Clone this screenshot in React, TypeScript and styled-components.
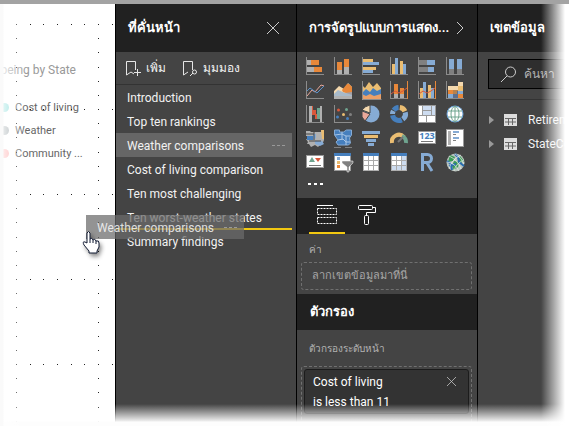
import React from "react";
import styled, { createGlobalStyle } from "styled-components";

const Global = createGlobalStyle`
  *, *::before, *::after { box-sizing: border-box; }
  body { margin: 0; background: #fff; }
  body, button, input { font-family: Roboto, "Open Sans", "Noto Sans", sans-serif; font-size: 12px; line-height: 16px; }
  button { border: 0; padding: 0; background: none; color: inherit; text-align: left; cursor: pointer; }
  h2, ul, p { margin: 0; padding: 0; }
  ul { list-style: none; }
  svg { display: block; flex: none; }
`;

const Page = styled.div`
  position: relative;
  display: grid;
  grid-template-columns: minmax(0, 1fr) 181px 181px 92px;
  height: 100vh;
  overflow: hidden;
  border-top: 4px solid #a3a3a3;
`;

const Fade = styled.div`
  position: absolute;
  inset: -4px 0 0;
  pointer-events: none;
  background:
    linear-gradient(to right, #fafafa 3px, rgba(255, 255, 255, 0.75) 4px, rgba(255, 255, 255, 0) 27px),
    linear-gradient(to left, #fff 4px, rgba(255, 255, 255, 0) 28px),
    linear-gradient(to top, #fdfdfd 4px, rgba(255, 255, 255, 0.9) 5px, rgba(255, 255, 255, 0) 22px);
`;

const Canvas = styled.main`
  position: relative;
  overflow: hidden;
  background: #fff;
  color: #666;
  padding-top: 58px;
`;

const Dots = styled.svg`
  position: absolute;
  inset: 0;
  width: 100%;
  height: 100%;
`;

const ChartTitle = styled.p`
  color: #999;
  white-space: nowrap;
  display: flex;
  justify-content: flex-end;
  width: 76px;
`;

const Legend = styled.ul`
  padding-top: 18px;
  font-size: 11px;
`;

const LegendItem = styled.li<{ $color: string }>`
  display: flex;
  align-items: center;
  height: 23px;
  gap: 6px;
  white-space: nowrap;
  &::before {
    content: "";
    width: 9px;
    height: 9px;
    border-radius: 50%;
    background: ${(p) => p.$color};
  }
`;

const Panel = styled.section`
  min-width: 0;
  border-left: 1px solid #000;
  background: #444;
  color: #f2f2f2;
`;

const Header = styled.header`
  display: flex;
  align-items: center;
  justify-content: space-between;
  height: 48px;
  padding: 0 12px;
  background: #212121;
  color: #fff;
`;

const Title = styled.h2`
  font-size: 13px;
  line-height: 20px;
  font-weight: 700;
  white-space: nowrap;
`;

const Toolbar = styled.div`
  display: flex;
  align-items: center;
  gap: 16px;
  height: 33px;
  padding-left: 9px;
  border-bottom: 1px solid #333;
`;

const ToolButton = styled.button`
  display: flex;
  align-items: center;
  gap: 4px;
  white-space: nowrap;
`;

const BookmarkRow = styled.li<{ $selected?: boolean; $dropAfter?: boolean }>`
  position: relative;
  display: flex;
  align-items: center;
  justify-content: space-between;
  height: 24px;
  margin-right: 4px;
  padding: 2px 7px 0 11px;
  background: ${(p) => (p.$selected ? "#666" : "transparent")};
  &::after {
    content: "";
    display: ${(p) => (p.$dropAfter ? "block" : "none")};
    position: absolute;
    inset: auto 0 -1px;
    height: 2px;
    background: #f2c811;
  }
`;

const RowButton = styled.button`
  flex: 1;
  white-space: nowrap;
`;

const DragGhost = styled.div`
  position: absolute;
  left: 86px;
  top: 211px;
  display: flex;
  align-items: center;
  justify-content: space-between;
  width: 158px;
  height: 24px;
  padding: 2px 7px 0 11px;
  background: rgba(107, 107, 107, 0.73);
  color: rgba(255, 255, 255, 0.8);
  white-space: nowrap;
`;

const Cursor = styled.svg`
  position: absolute;
  left: 82px;
  top: 226px;
  filter: drop-shadow(2px 3px 2px rgba(0, 0, 0, 0.45));
`;

const VisualGrid = styled.div`
  display: grid;
  grid-template-columns: repeat(6, 18px);
  gap: 6px 10px;
  padding: 5px 9px 0;
`;

const VisualButton = styled.button`
  width: 18px;
  height: 18px;
`;

const MoreButton = styled.button`
  display: block;
  height: 27px;
  padding: 0 10px;
`;

const Tabs = styled.div`
  display: flex;
  gap: 4px;
  height: 36px;
  padding-left: 12px;
  background: #212121;
`;

const Tab = styled.button<{ $active?: boolean }>`
  display: flex;
  justify-content: center;
  align-items: center;
  width: 36px;
  border-bottom: 2px solid ${(p) => (p.$active ? "#f2c811" : "transparent")};
`;

const WellLabel = styled.p<{ $tall?: boolean }>`
  padding: ${(p) => (p.$tall ? "11px 12px 9px" : "8px 12px 4px")};
  font-size: 10px;
  color: #b3b3b3;
`;

const Well = styled.div<{ $card?: boolean }>`
  margin: 0 5px 4px 4px;
  border: 1px dashed #707070;
  border-radius: 3px;
  min-height: 28px;
  padding: ${(p) => (p.$card ? "2px 2px 20px" : "5px 10px")};
  font-size: ${(p) => (p.$card ? "12px" : "11px")};
  color: #a6a6a6;
  white-space: nowrap;
`;

const FilterHeader = styled(Header)`
  height: 36px;
  padding-left: 13px;
`;

const FilterCard = styled.div`
  display: flex;
  justify-content: space-between;
  border: 1px solid #1c1c1c;
  border-radius: 3px;
  background: #333;
  color: #fff;
  padding: 2px 12px 1px 8px;
  line-height: 20px;
`;

const CloseButton = styled.button`
  height: 18px;
`;

const SearchBox = styled.label`
  display: flex;
  align-items: center;
  gap: 7px;
  height: 30px;
  margin: 7px 0 10px 10px;
  padding-left: 11px;
  border: 1px solid #000;
  background: #2e2e2e;
`;

const SearchInput = styled.input`
  flex: 1;
  min-width: 0;
  border: 0;
  padding: 0;
  outline: 0;
  background: transparent;
  &::placeholder { color: #b3b3b3; opacity: 1; }
`;

const FieldList = styled.ul`
  border-top: 1px solid #333;
  padding: 8px 0 0 11px;
`;

const FieldButton = styled.button`
  display: flex;
  align-items: center;
  height: 24px;
  gap: 10px;
  white-space: nowrap;
`;

const O = "#e8883a", G = "#b0b0b0", D = "#808080", Y = "#eabd72", B = "#86abd4", N = "#467fbd", R = "#d9583b", P = "#eaa89a", T = "#6fa48f", C = "#f5d9ae";

type Bar = [number, number, number, number, string];
const Bars = ({ of }: { of: Bar[] }) => (
  <>{of.map(([x, y, w, h, f], i) => <rect key={i} x={x} y={y} width={w} height={h} fill={f} />)}</>
);
const Axes = () => <path d="M0 0h1v17h17v1H0z" fill="#8c8c8c" />;

const arc = (a: number, b: number, r: number) => {
  const pt = (t: number) => `${9 + r * Math.sin(t * Math.PI * 2)} ${9 - r * Math.cos(t * Math.PI * 2)}`;
  return `M${pt(a)}A${r} ${r} 0 ${b - a > 0.5 ? 1 : 0} 1 ${pt(b)}`;
};

const visuals: { name: string; art: React.ReactNode }[] = [
  { name: "Stacked bar", art: <><Axes /><Bars of={[[1, 3, 4, 5, G], [5, 3, 8, 5, O], [1, 10, 7, 5, G], [8, 10, 8, 5, O]]} /></> },
  { name: "Stacked column", art: <><Axes /><Bars of={[[3, 5, 5, 8, O], [3, 13, 5, 4, G], [10, 2, 5, 8, O], [10, 10, 5, 7, G]]} /></> },
  { name: "Clustered bar", art: <><Axes /><Bars of={[[1, 2, 10, 3, Y], [1, 5, 16, 3, B], [1, 10, 13, 3, Y], [1, 13, 10, 3, B]]} /></> },
  { name: "Clustered column", art: <><Axes /><Bars of={[[2, 7, 3, 10, Y], [5, 1, 3, 16, B], [10, 4, 3, 13, Y], [13, 7, 3, 10, B]]} /></> },
  { name: "100% stacked bar", art: <><Axes /><Bars of={[[1, 3, 8, 5, D], [9, 3, 8, 5, B], [1, 10, 9, 5, D], [10, 10, 6, 5, B]]} /></> },
  { name: "100% stacked column", art: <><Axes /><Bars of={[[3, 2, 5, 10, B], [3, 12, 5, 5, D], [11, 2, 5, 10, B], [11, 12, 5, 5, D]]} /></> },

  { name: "Line", art: <><Axes /><g fill="none" strokeWidth="1"><path d="M1 15L6 9l3 2 6-7 3 1" stroke={P} /><path d="M1 10l3-3 7 5 4-4 3-3" stroke="#5b92cc" /></g></> },
  { name: "Area", art: <><path d="M0 10L5 5l5 3 4-6 4 4v10H0z" fill={C} /><path d="M8 9l5-6h2l3 3v8l-9-3z" fill={O} /><path d="M0 13l4-4 7 3 7-1v6H0z" fill={B} opacity=".7" /><path d="M0 15h18v3H0z" fill={G} /></> },
  { name: "Stacked area", art: <><path d="M0 4l3 3 4-6 4 5 4-4 4 5v12H0z" fill={Y} /><path d="M0 12l4-4 4 3 3-4 4 3 4-2v10H0z" fill={N} /><path d="M0 13l4 2 4-2 4 2 7-2v5H0z" fill="#eaa068" /><path d="M.5 0v18.500h19" fill="none" stroke="#8c8c8c" /></> },
  { name: "Line and stacked column", art: <><Axes /><Bars of={[[4, 3, 4, 10, O], [4, 13, 4, 4, G], [10, 7, 4, 7, O], [10, 13, 4, 4, G], [17, 0, 1, 18, O]]} /><path d="M1 13l4-3 4 2 4-2 4-3" fill="none" stroke={R} /></> },
  { name: "Line and clustered column", art: <><Axes /><Bars of={[[2, 7, 3, 10, Y], [5, 1, 3, 16, B], [10, 4, 3, 13, Y], [13, 7, 3, 10, B], [17, 0, 1, 18, O]]} /><path d="M1 13l4-3 4 2 4-2 4-3" fill="none" stroke={R} /></> },
  { name: "Ribbon", art: <><Axes /><path d="M7 5h5V1h5v5h-5v3H7z" fill={C} /><path d="M7 9h5V5h5v6h-5v2H7z" fill="#b5814f" /><path d="M7 13h4v-3h3v7H7z" fill="#5c6f8f" /><Bars of={[[2, 5, 5, 4, C], [2, 9, 5, 4, O], [2, 13, 5, 4, B], [12, 1, 5, 4, C], [12, 5, 5, 5, Y], [12, 10, 5, 3, B], [12, 13, 5, 4, O]]} /></> },

  { name: "Waterfall", art: <><Axes /><Bars of={[[3, 1, 3, 16, G], [6, 1, 1, 8, R], [6, 5, 4, 5, R], [9, 9, 2, 5, R], [11, 3, 3, 11, T], [14, 1, 2, 16, G]]} /></> },
  { name: "Scatter", art: <><Axes /><g><circle cx="4.500" cy="5" r="1.500" fill={R} /><circle cx="12.500" cy="4.500" r="1.500" fill={T} /><circle cx="9.500" cy="9.500" r="1.500" fill={Y} /><circle cx="3.500" cy="12" r="1.500" fill={N} /><circle cx="16.500" cy="9.500" r="1.500" fill={D} /><circle cx="13.500" cy="13.500" r="1.500" fill={N} /></g></> },
  { name: "Pie", art: <g shapeRendering="auto"><circle cx="9" cy="9" r="8.500" fill={B} /><path d="M8 8V0Q3 1 0 5z" fill={C} stroke="#444" /><path d="M8 9L0 6v6l3 4z" fill={P} stroke="#444" /></g> },
  { name: "Donut", art: <g shapeRendering="auto" fill="none" strokeWidth="5"><path d={arc(0.02, 0.18, 6.5)} stroke={Y} /><path d={arc(0.21, 0.4, 6.5)} stroke={B} /><path d={arc(0.43, 0.72, 6.5)} stroke={N} /><path d={arc(0.75, 0.83, 6.5)} stroke={B} /><path d={arc(0.85, 0.99, 6.5)} stroke={N} /></g> },
  { name: "Treemap", art: <><Bars of={[[0, 0, 18, 18, "#999"], [1, 1, 3, 9, "#fff"], [5, 1, 8, 4, "#cddcf0"], [5, 6, 8, 4, "#cddcf0"], [14, 1, 3, 9, "#cddcf0"], [1, 11, 7, 6, "#fff"], [9, 11, 8, 6, "#fff"]]} /></> },
  { name: "Map", art: <g shapeRendering="auto" fill="none" stroke={T}><circle cx="9" cy="9" r="8" fill="#fff" stroke="#6aa2d8" /><ellipse cx="9" cy="9" rx="4" ry="7.500" /><path d="M9 1v16M2 6h14M2 12h14" /></g> },

  { name: "Filled map", art: <><path d="M0 2h4l1 1h10V1h3v10l-2 5h-2l-2 2-3-2-4 2H5l-2-3H1l1-2-2-3h3V7H0z" fill={G} /><path d="M1 7h6V5h3v4l-3 2H1zM9 12h7l2 3-4 2-5-2z" fill={B} /><path d="M1 7h6v4H1z" fill={N} /><path d="M15 1h3v9h-2z" fill={Y} /><path d="M0 5h8M8 3v8M3 12h12" stroke="#444" fill="none" /></> },
  { name: "Shape map", art: <><path d="M.5 1h5v2h4l3-2h5v5l-2 3 1 5-2 2H4l-2-3 2-2-3.500-5z" fill={N} stroke={B} /><path d="M1 6l7-1 4 2h4M4 11l5-1 3 3h4M8 3v8M12 7v9" fill="none" stroke="#a8c5e5" /><path d="M0 18.500h7M11 18.500h7" stroke={D} fill="none" /></> },
  { name: "Funnel", art: <Bars of={[[0, 2, 18, 3, B], [2, 6, 14, 3, Y], [4, 10, 10, 3, B], [6, 14, 6, 3, B]]} /> },
  { name: "Gauge", art: <g shapeRendering="auto" fill="none" strokeWidth="4"><path d="M2 14a7 7 0 0 1 12-6" stroke={Y} /><path d="M12 7a7 7 0 0 1 4 7" stroke={T} /><path d="M8 13l5-5" stroke="#777" strokeWidth="2" /></g> },
  { name: "Card", art: <><Bars of={[[0, 2, 18, 13, "#999"], [1, 3, 16, 11, "#fff"], [3, 12, 12, 1, "#777"]]} /><text x="9" y="10" textAnchor="middle" fontFamily="Open Sans" fontWeight="700" fontSize="9" fill={N}>123</text></> },
  { name: "Multi-row card", art: <Bars of={[[0, 0, 18, 18, "#999"], [1, 1, 16, 16, "#fff"], [2, 2, 3, 14, G], [7, 2, 6, 2, B], [7, 5, 3, 1, D], [7, 8, 6, 2, B], [7, 11, 3, 1, D]]} /> },

  { name: "KPI", art: <><Bars of={[[0, 2, 18, 13, "#999"], [1, 3, 16, 11, "#fff"], [3, 12, 12, 1, "#777"]]} /><path d="M3 9l3-5 3 5z" fill={T} /><path d="M9 5h6l-3 4z" fill={R} /></> },
  { name: "Slicer", art: <><Bars of={[[0, 0, 17, 18, "#999"], [1, 3, 15, 14, "#fff"], [0, 0, 17, 3, N], [3, 4, 3, 3, B], [3, 8, 3, 3, Y], [3, 12, 3, 3, O]]} /><path d="M8 8h11v2l-4 4v5h-2v-5L8 10z" fill={D} stroke="#fff" strokeWidth=".5" /></> },
  { name: "Table", art: <><Bars of={[[1, 0, 16, 18, G], [2, 3, 14, 14, "#fff"], [1, 0, 16, 3, N]]} /><path d="M6.500 3v15M11.500 3v15M2 7.500h14M2 12.500h14" stroke="#aaa" /></> },
  { name: "Matrix", art: <><Bars of={[[1, 0, 16, 18, G], [2, 3, 14, 14, "#fff"], [12, 3, 4, 14, "#cddcf0"], [2, 13, 14, 4, "#cddcf0"], [1, 0, 16, 3, N]]} /><path d="M6.500 3v15M11.500 3v15M2 7.500h14M2 12.500h14" stroke="#aaa" /></> },
  { name: "R script", art: <path d="M4.500 18V1.500h5a4 4 0 0 1 0 8H5M9 10l5 8" fill="none" stroke={B} strokeWidth="3" shapeRendering="auto" /> },
  { name: "ArcGIS map", art: <g shapeRendering="auto"><circle cx="9.500" cy="9.500" r="9" fill="#b8c4bd" /><path d="M4 2l5 2-2 4-5 1zM8 8l5 1-1 5-4 3-2-4zM14 3l4 5-3 2-3-4z" fill="#3b9a57" /><path d="M1 8l4 3 1 6M9 1l3 3 1 5 5 4M3 13l7-2" stroke="#286bb0" strokeWidth="2" fill="none" /><path d="M3 3q9 4 12 13M1 9q8 1 12 9M9 1q7 4 9 10M3 16Q5 7 15 2M8 18q2-8 10-11" stroke="#eee" fill="none" strokeWidth=".7" /></g> },
];

const Ellipsis = () => <svg width="13" height="2" aria-hidden="true"><path d="M0 .5h3M5 .5h3M10 .5h3" stroke="#999" /></svg>;

const Close = ({ size }: { size: number }) => (
  <svg width={size} height={size} viewBox="0 0 12 12" aria-hidden="true"><path d="M0 0l12 12M12 0L0 12" stroke="#ccc" /></svg>
);

const BookmarkIcon = ({ view }: { view?: boolean }) => (
  <svg width="17" height="17" fill="none" stroke="#e6e6e6" aria-hidden="true">
    <path d="M6 12l-4.500 3V1.500h9V10" />
    {view ? <><circle cx="12.500" cy="12" r="2" /><path d="M11 13l-3 3" /></> : <path d="M6 12l3 2M9 12.500h7M12.500 9v7" />}
  </svg>
);

const bookmarks = [
  "Introduction", "Top ten rankings", "Weather comparisons", "Cost of living comparison",
  "Ten most challenging", "Ten worst-weather states", "Summary findings",
];

const gridDots = () => {
  const dots: [number, number][] = [];
  for (let r = 0; r <= 28; r++)
    for (let c = 0; c <= 7; c++)
      if (r % 6 === 0 || c === 0 || c === 6) dots.push([Math.round(16 + (c * 82) / 6), Math.round(20 + (r * 85) / 6)]);
  return dots;
};

export default function App() {
  return (
    <>
      <Global />
      <Page>
        <Canvas>
          <ChartTitle>Wellbeing by State</ChartTitle>
          <Legend>
            <LegendItem $color="#6fd6d2">Cost of living</LegendItem>
            <LegendItem $color="#8f9a9e">Weather</LegendItem>
            <LegendItem $color="#ff9c9c">Community ...</LegendItem>
          </Legend>
          <Dots aria-hidden="true">
            {gridDots().map(([x, y]) => <rect key={`${x}-${y}`} x={x} y={y} width="1" height="1" fill="#222" />)}
          </Dots>
        </Canvas>

        <Panel>
          <Header>
            <Title>ที่คั่นหน้า</Title>
            <button aria-label="Close"><svg width="20" height="13" aria-hidden="true"><path d="M3 0l12 12M15 0L3 12" stroke="#ccc" /></svg></button>
          </Header>
          <Toolbar>
            <ToolButton><BookmarkIcon />เพิ่ม</ToolButton>
            <ToolButton><BookmarkIcon view />มุมมอง</ToolButton>
          </Toolbar>
          <ul>
            {bookmarks.map((name, i) => (
              <BookmarkRow key={name} $selected={i === 2} $dropAfter={i === 5}>
                <RowButton>{name}</RowButton>
                {i === 2 && <button aria-label="More options"><Ellipsis /></button>}
              </BookmarkRow>
            ))}
          </ul>
        </Panel>

        <Panel>
          <Header>
            <Title>การจัดรูปแบบการแสดง...</Title>
            <button aria-label="Collapse"><svg width="9" height="13" fill="none" aria-hidden="true"><path d="M1 0l6 6-6 6" stroke="#ccc" /></svg></button>
          </Header>
          <VisualGrid>
            {visuals.map((v) => (
              <VisualButton key={v.name} aria-label={v.name}>
                <svg width="18" height="18" overflow="visible" aria-hidden="true">{v.art}</svg>
              </VisualButton>
            ))}
          </VisualGrid>
          <MoreButton aria-label="More visuals">
            <svg width="16" height="3" aria-hidden="true"><path d="M1 1h3M7 1h3M13 1h3" stroke="#fff" strokeWidth="2" /></svg>
          </MoreButton>
          <Tabs>
            <Tab $active aria-label="Fields">
              <svg width="20" height="20" fill="none" stroke="#fff" aria-hidden="true"><path d="M0 .5h16" /><path d="M.5 3.500h19v6H.5zM.5 12.500h19v6H.5z" strokeDasharray="2 1" /></svg>
            </Tab>
            <Tab aria-label="Format">
              <svg width="18" height="20" fill="none" stroke="#fff" aria-hidden="true"><rect x=".5" y=".5" width="14" height="4" rx="1" /><path d="M15 2.500h2.500v5h-9v3" /><rect x="6.500" y="10.500" width="4" height="9" rx="1" /></svg>
            </Tab>
          </Tabs>
          <WellLabel>ค่า</WellLabel>
          <Well>ลากเขตข้อมูลมาที่นี่</Well>
          <FilterHeader><Title>ตัวกรอง</Title></FilterHeader>
          <WellLabel $tall>ตัวกรองระดับหน้า</WellLabel>
          <Well $card>
            <FilterCard>
              <div>Cost of living<br />is less than 11</div>
              <CloseButton aria-label="Remove filter"><Close size={9} /></CloseButton>
            </FilterCard>
          </Well>
        </Panel>

        <Panel>
          <Header><Title>เขตข้อมูล</Title></Header>
          <SearchBox>
            <svg width="17" height="17" fill="none" stroke="#ccc" aria-hidden="true"><circle cx="10.500" cy="6" r="5" /><path d="M7 10l-6 6" /></svg>
            <SearchInput aria-label="ค้นหา" placeholder="ค้นหา" />
          </SearchBox>
          <FieldList>
            {["Retirement", "StateCodes"].map((name) => (
              <li key={name}>
                <FieldButton>
                  <svg width="5" height="8" aria-hidden="true"><path d="M0 0l5 4-5 4z" fill="#999" /></svg>
                  <svg width="14" height="12" aria-hidden="true"><path d="M0 0h13v12H0z" fill="#ddd" /><path d="M1 4.500h11M1 8h11M4.500 4v7M8.500 4v7" stroke="#666" /></svg>
                  {name}
                </FieldButton>
              </li>
            ))}
          </FieldList>
        </Panel>

        <DragGhost>Weather comparisons<Ellipsis /></DragGhost>
        <Cursor width="20" height="26" aria-hidden="true">
          <path d="M5 13V3q1.500-3 3 0v6q2-2 3 1 2-2 3 1 3-1 3 2v4l-2 4v2H7v-2l-5-6q-2-4 1-3z" fill="#fff" stroke="#111a33" />
          <path d="M8 9v4M11 10v3M14 11v3" stroke="#111a33" />
        </Cursor>
        <Fade />
      </Page>
    </>
  );
}
